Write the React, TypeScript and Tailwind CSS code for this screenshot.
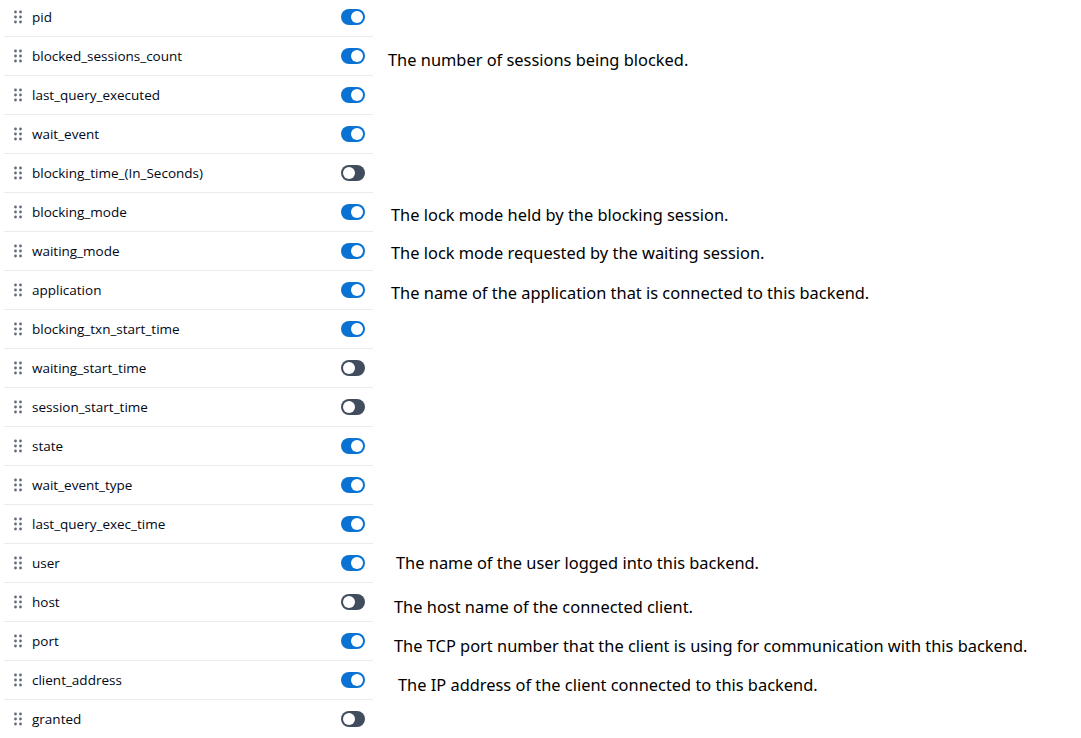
import React from "react";

type Row = {
  name: string;
  on: boolean;
  desc?: string;
};

const rows: Row[] = [
  { name: "pid", on: true },
  { name: "blocked_sessions_count", on: true, desc: "The number of sessions being blocked." },
  { name: "last_query_executed", on: true },
  { name: "wait_event", on: true },
  { name: "blocking_time_(In_Seconds)", on: false },
  { name: "blocking_mode", on: true, desc: "The lock mode held by the blocking session." },
  { name: "waiting_mode", on: true, desc: "The lock mode requested by the waiting session." },
  { name: "application", on: true, desc: "The name of the application that is connected to this backend." },
  { name: "blocking_txn_start_time", on: true },
  { name: "waiting_start_time", on: false },
  { name: "session_start_time", on: false },
  { name: "state", on: true },
  { name: "wait_event_type", on: true },
  { name: "last_query_exec_time", on: true },
  { name: "user", on: true, desc: "The name of the user logged into this backend." },
  { name: "host", on: false, desc: "The host name of the connected client." },
  { name: "port", on: true, desc: "The TCP port number that the client is using for communication with this backend." },
  { name: "client_address", on: true, desc: "The IP address of the client connected to this backend." },
  { name: "granted", on: false },
];

const descClass: Record<string, string> = {
  blocked_sessions_count: "ml-[15px] pt-[8px]",
  blocking_mode: "ml-[18px] pt-[6px]",
  waiting_mode: "ml-[18px] pt-[4px]",
  application: "ml-[18px] pt-[6px]",
  user: "ml-[23px]",
  host: "ml-[21px] pt-[10px]",
  port: "ml-[21px] pt-[10px]",
  client_address: "ml-[25px] pt-[10px]",
};

function Grip() {
  return (
    <svg width="8" height="14" viewBox="0 0 8 14" className="shrink-0 text-[#5f6b7a]">
      {[1.5, 6.5].map((x) =>
        [2, 7, 12].map((y) => <circle key={`${x}-${y}`} cx={x} cy={y} r="1.4" fill="currentColor" />)
      )}
    </svg>
  );
}

function Toggle({ on }: { on: boolean }) {
  return (
    <div
      className={`flex h-4 w-6 items-center rounded-full px-[2px] ${
        on ? "justify-end bg-[#0972d3]" : "justify-start bg-[#414d5c]"
      }`}
    >
      <div className="size-3 rounded-full bg-white" />
    </div>
  );
}

export default function App() {
  return (
    <div className="min-h-screen bg-white pl-[4px] font-['Open_Sans',sans-serif]">
      <div className="-mt-[2px] flex flex-col">
        {rows.map((r) => (
          <div key={r.name} className="flex items-center">
            <div className="flex h-[39px] w-[369px] shrink-0 items-center border-b border-[#e9ebed] pl-[10px] pr-[8px]">
              <Grip />
              <span className="ml-[10px] flex-1 text-[13.5px] text-[#000716]">{r.name}</span>
              <Toggle on={r.on} />
            </div>
            {r.desc && (
              <span className={`whitespace-nowrap font-['Noto_Sans',sans-serif] text-[16.4px] text-black ${descClass[r.name]}`}>
                {r.desc}
              </span>
            )}
          </div>
        ))}
      </div>
    </div>
  );
}
